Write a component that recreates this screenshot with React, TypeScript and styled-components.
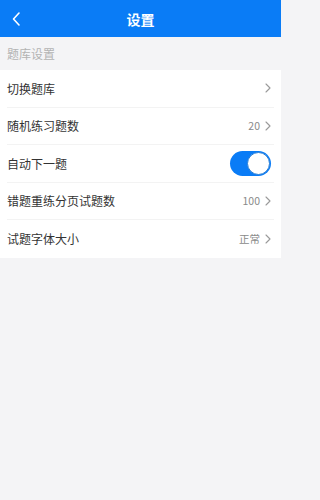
import styled, { createGlobalStyle } from "styled-components";

const Global = createGlobalStyle`
  html, body {
    margin: 0;
    padding: 0;
    background: #f4f4f6;
    font-family: "Noto Sans CJK SC", "Noto Sans", sans-serif;
  }
`;

const Page = styled.div`
  width: 281px;
  min-height: 500px;
  background: #f4f4f6;
`;

const Header = styled.header`
  height: 37px;
  background: #0a7cf6;
  display: flex;
  align-items: center;
  justify-content: center;
  position: relative;
`;

const BackButton = styled.span`
  position: absolute;
  left: 10px;
  top: 10px;
  width: 16px;
  height: 18px;
  display: flex;
`;

const Title = styled.h1`
  margin: 0;
  color: #fff;
  font-size: 14px;
  font-weight: 700;
`;

const SectionTitle = styled.div`
  height: 33px;
  display: flex;
  align-items: center;
  padding: 0 7px;
  color: #b3b3b3;
  font-size: 12px;
`;

const List = styled.div`
  background: #fff;
`;

const Row = styled.div<{ $last?: boolean }>`
  height: 37.5px;
  margin: 0 7px;
  display: flex;
  align-items: center;
  justify-content: space-between;
  border-bottom: ${(p) => (p.$last ? "none" : "1px solid #f3f3f3")};
  box-sizing: border-box;
`;

const Label = styled.span`
  color: #333;
  font-size: 12px;
`;

const Right = styled.span`
  display: flex;
  align-items: center;
  gap: 5px;
  margin-right: 3px;
  color: #8a8a8a;
  font-size: 10.5px;
`;

const Toggle = styled.span`
  width: 41px;
  height: 25px;
  margin-right: 3px;
  border-radius: 13px;
  background: #0a7cf6;
  display: flex;
  align-items: center;
  justify-content: flex-end;
  padding: 1px;
  box-sizing: border-box;
`;

const Knob = styled.span`
  width: 23px;
  height: 23px;
  border-radius: 50%;
  background: #fff;
  box-sizing: border-box;
  border: 1px solid #2a7fd6;
`;

const Chevron = () => (
  <svg width="6" height="10" viewBox="0 0 6 10" fill="none">
    <path d="M1 1l4 4-4 4" stroke="#9a9a9a" strokeWidth="1.1" strokeLinecap="round" strokeLinejoin="round" />
  </svg>
);

const rows: { label: string; value?: string; toggle?: boolean }[] = [
  { label: "切换题库", value: "" },
  { label: "随机练习题数", value: "20" },
  { label: "自动下一题", toggle: true },
  { label: "错题重练分页试题数", value: "100" },
  { label: "试题字体大小", value: "正常" },
];

export default function App() {
  return (
    <Page>
      <Global />
      <Header>
        <BackButton>
          <svg width="16" height="18" viewBox="0 0 16 18" fill="none">
            <path d="M9 3L3.5 9 9 15" stroke="#fff" strokeWidth="1.6" strokeLinecap="round" strokeLinejoin="round" />
          </svg>
        </BackButton>
        <Title>设置</Title>
      </Header>
      <SectionTitle>题库设置</SectionTitle>
      <List>
        {rows.map((r, i) => (
          <Row key={r.label} $last={i === rows.length - 1}>
            <Label>{r.label}</Label>
            {r.toggle ? (
              <Toggle>
                <Knob />
              </Toggle>
            ) : (
              <Right>
                {r.value}
                <Chevron />
              </Right>
            )}
          </Row>
        ))}
      </List>
    </Page>
  );
}
